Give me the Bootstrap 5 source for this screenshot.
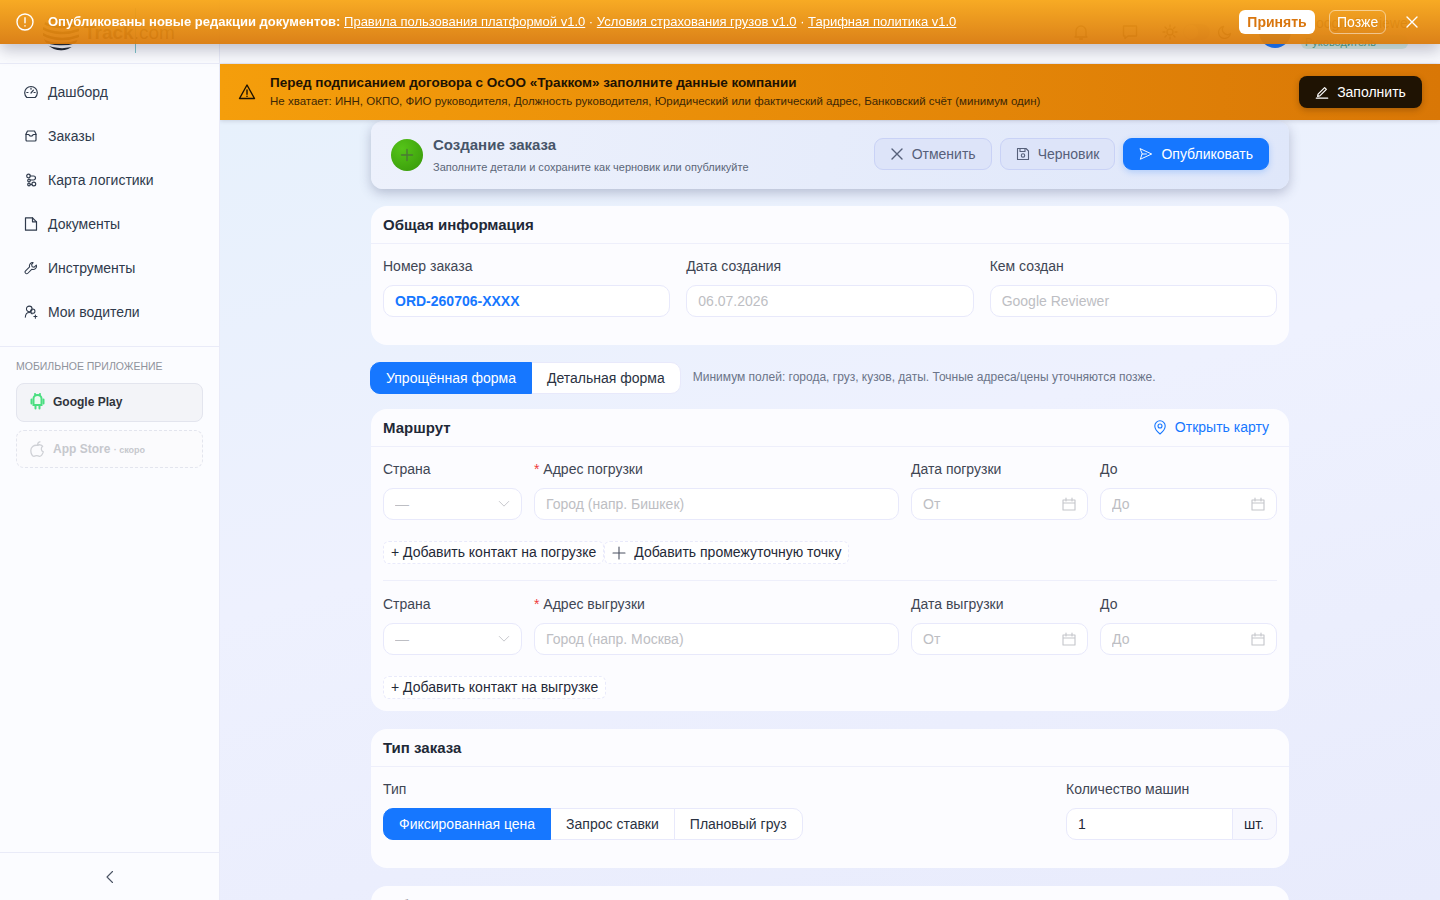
<!doctype html>
<html lang="ru">
<head>
  <meta charset="utf-8">
  <meta name="viewport" content="width=device-width, initial-scale=1">
  <title>Создание заказа</title>
  <link href="https://cdn.jsdelivr.net/npm/bootstrap@5.3.2/dist/css/bootstrap.min.css" rel="stylesheet">
  <style>
    body { font-family: "Liberation Sans", Arial, sans-serif; font-size: 14px; color: #1f2937; background: #eef1fe; }
    svg { display: block; flex: none; }
    .ico { fill: none; stroke: currentColor; stroke-width: 1.4; stroke-linecap: round; stroke-linejoin: round; }
    .ico-thin { stroke-width: 1.1; }

    /* sidebar */
    .side { width: 220px; flex: none; background: #fbfcff; border-right: 1px solid #e9ebf8; }
    .side-top { height: 64px; border-bottom: 1px solid #e9ebf8; flex: none; }
    .logo-word { left: 84px; top: 21px; font-size: 19px; font-weight: 700; color: #27323f; line-height: 24px; }
    .logo-word span { font-weight: 400; }
    .logo-line { left: 135px; top: 8px; width: 1px; height: 45px; background: #7cc4c8; }
    .logo-pic { left: 43px; top: 12px; }
    .side-nav { padding-top: 6px; padding-bottom: 12px; border-bottom: 1px solid #e9ebf8; }
    .side-link { height: 44px; padding-left: 24px; gap: 10px; color: #2f3a4c; text-decoration: none; }
    .side-link svg { color: #2f3a4c; stroke-width: 1.2; }
    .app-head { font-size: 10.5px; color: #8f939c; line-height: 14px; padding: 12px 16px 10px; }
    .app-btn { margin: 0 16px 8px; border-radius: 8px; font-size: 12px; font-weight: 700; gap: 8px; padding-left: 13px; }
    .app-on { height: 39px; padding-bottom: 2px; background: #f3f4f8; border: 1px solid #e3e5ee; color: #30343c; }
    .app-off { height: 38px; background: #fbfbfd; border: 1px dashed #e3e5ee; color: #c6c8cd; }
    .app-off small { font-size: 9px; font-weight: 700; color: #c6c8cd; }
    .side-foot { height: 48px; border-top: 1px solid #e9ebf8; color: #4a5363; flex: none; }

    /* header */
    .top-bar { height: 64px; flex: none; background: #f8f9fd; border-bottom: 1px solid #e9ebf8; padding-right: 32px; color: #555; }
    .bell-gap { margin-right: 31px; }
    .chat-gap { margin-right: 23px; }
    .theme-knob { width: 27px; height: 16px; margin: 0 8px 0 5px; background: #d8dbe4; border-radius: 8px; }
    .theme-knob span { display: block; width: 14px; height: 14px; margin: 1px; background: #fff; border-radius: 50%; }
    .avatar { width: 32px; height: 32px; margin: 0 10px 0 27px; background: #1677ff; }
    .who-box { width: 107px; white-space: nowrap; }
    .who { font-size: 14px; color: #333; line-height: 16px; padding-left: 4px; }
    .role { font-size: 11px; color: #4fa888; background: #d9f0e8; border-radius: 6px; line-height: 14px; padding: 0 4px; margin-top: 4px; }

    /* banners */
    .notice { height: 44px; z-index: 1050; color: #fff; padding: 0 20px 0 16px; font-size: 13px; background: linear-gradient(180deg, rgba(247,166,24,.95), rgba(217,122,12,.95)); box-shadow: 0 6px 16px rgba(40,40,70,.28); }
    .notice a { color: #fff; }
    .notice-txt { margin-left: 14px; }
    .notice-ok { height: 24px; padding: 0 8px; font-size: 14px; font-weight: 700; color: #d9760e; background: #fff; border: 0; border-radius: 6px; width: 76px; margin-right: 14px; }
    .notice-ok:hover { color: #d9760e; background: #fff; }
    .notice-later { height: 24px; padding: 0 7px; font-size: 14px; color: #fff; background: transparent; border: 1px solid rgba(255,255,255,.5); border-radius: 6px; width: 57px; margin-right: 18px; }
    .warn-bar { height: 56px; flex: none; padding: 0 18px; color: #1d1203; background: linear-gradient(90deg, #f59e0b, #d97706); z-index: 5; box-shadow: 0 1px 4px rgba(60,60,90,.18); }
    .warn-txt { margin-left: 14px; }
    .warn-title { font-size: 13.5px; font-weight: 700; line-height: 18px; margin-top: -1px; margin-bottom: 1px; }
    .warn-sub { font-size: 11.5px; line-height: 16px; color: #3c2706; }
    .warn-btn { height: 32px; width: 123px; font-size: 14px; color: #fff; background: #1f1303; border: 0; border-radius: 8px; gap: 8px; box-shadow: 0 2px 6px rgba(60,30,0,.3); }
    .warn-btn:hover { color: #fff; background: #1f1303; }

    /* content */
    .scroll-area { background: linear-gradient(165deg, #e7f1fc, #eef1fe 45%, #e8ebfc); padding-top: 1px; }
    .page-col { width: 918px; margin: 0 auto; }
    .order-head { height: 68px; padding: 0 20px; border-radius: 12px; background: linear-gradient(100deg, #edf1fc, #dfe7fa); box-shadow: 0 4px 12px rgba(70,80,120,.32); margin-bottom: 17px; }
    .plus-dot { width: 32px; height: 32px; margin-right: 10px; flex: none; background: radial-gradient(circle at 35% 30%, #55c418, #369609); color: #4b7a35; }
    .order-title { font-size: 15px; font-weight: 700; color: #475569; line-height: 18px; }
    .order-sub { font-size: 11px; color: #5b6678; line-height: 14px; margin-top: 6px; }
    .head-actions { margin-top: -2px; }
    .head-btn { height: 32px; font-size: 14px; border-radius: 9px; gap: 8px; padding: 0 15px; color: #56607a; background: #dde4f9; border: 1px solid #c9d2f6; }
    .head-btn:hover { color: #56607a; background: #dde4f9; border-color: #c9d2f6; }
    .head-main { color: #fff; background: #1677ff; border-color: #1677ff; box-shadow: 0 2px 6px rgba(22,119,255,.25); }
    .head-main:hover { color: #fff; background: #1677ff; border-color: #1677ff; }

    .form-box { background: #fcfcff; border: 0; border-radius: 16px; margin-bottom: 18px; }
    .form-box .card-header { height: 38px; padding: 1px 12px 0; font-size: 15px; font-weight: 700; color: #1f2937; background: transparent; border-bottom: 1px solid #eeeffb; }
    .form-box .card-body { padding: 12px; }
    .fld-label { font-size: 14px; line-height: 22px; margin: -1px 0 8px; color: #3f4654; }
    .req { color: #ef3b3b; }
    .fld { height: 32px; font-size: 14px; padding: 0 11px; border: 1px solid #e8e9fb; border-radius: 10px; background: #fff; color: #1f2937; }
    .fld:disabled { background: #fff; color: #bdbec3; }
    .fld::placeholder { color: #bdbec3; }
    .order-no { color: #1677ff; font-weight: 700; }
    .fld-icon { right: 12px; top: 9px; color: #c4c5ca; pointer-events: none; }
    .chev-icon { right: 12px; top: 10px; color: #c4c5ca; pointer-events: none; }
    .three-cols { display: grid; grid-template-columns: repeat(3, 1fr); gap: 16px; padding-bottom: 16px; }
    .route-cols { display: grid; grid-template-columns: 139px 1fr 177px 177px; gap: 12px; }
    .route-add { margin-top: 21px; }
    .dash-btn { height: 23px; padding: 0 7px; font-size: 14px; line-height: 21px; color: #1f2937; background: #fff; border: 1px dashed #e9eafb; border-radius: 6px; gap: 8px; }
    .dash-btn:hover { color: #1f2937; background: #fff; border-color: #e9eafb; }
    .dash-btn svg { color: #4a5160; }
    .route-line { border-top: 1px solid #eeeffb; margin: 16px 0 13px; }
    .map-link { color: #1677ff; text-decoration: none; gap: 8px; margin: -1px 8px 0 0; font-weight: 400; font-size: 14px; }

    .mode-row { height: 32px; margin: -1px 0 15px -1px; }
    .seg-btn { height: 32px; font-size: 14px; padding: 0 15px; color: #2a3242; background: #fff; border: 1px solid #e8e9fb; border-radius: 10px; }
    .seg-btn:hover { color: #2a3242; background: #fff; border-color: #e8e9fb; }
    .seg-on, .seg-on:hover { color: #fff; background: #1677ff; border-color: #1677ff; z-index: 2; }
    .mode-hint { font-size: 12px; color: #6b7488; margin-left: 12px; position: relative; top: -1px; }
    .unit { font-size: 14px; width: 45px; padding: 0 11px; background: #f8f8fe; border: 1px solid #e8e9fb; border-radius: 0 10px 10px 0; color: #1f2937; }
    .qty-box { width: 211px; }
    .qty-box .fld { border-radius: 10px 0 0 10px; }
    .type-body { padding-bottom: 28px !important; }
  </style>
</head>
<body>
  <div class="d-flex vh-100 overflow-hidden">

    <!-- Sidebar -->
    <aside class="side d-flex flex-column">
      <div class="side-top position-relative">
        <svg class="logo-pic position-absolute" width="36" height="40" viewBox="0 0 36 40" fill="none" stroke="#1d2530" stroke-width="2.600">
          <clipPath id="logoClip"><circle cx="18" cy="20" r="18.500"/></clipPath>
          <g clip-path="url(#logoClip)">
            <path d="M-2 3C8 10 24 11 38 5M-2 9c10 7 26 8 40 2M-2 15c10 7 26 8 40 2M-2 21c10 7 26 8 40 2M-2 27c10 6 26 7 40 1M0 33c10 5 24 6 38 1M4 38c8 3 20 4 30 1"/>
          </g>
        </svg>
        <div class="logo-word position-absolute">Track<span>.com</span></div>
        <div class="logo-line position-absolute"></div>
      </div>

      <nav class="side-nav">
        <a class="side-link d-flex align-items-center" href="#">
          <svg class="ico" width="14" height="14" viewBox="0 0 14 14"><path d="M2.800 12.500A6.300 6.300 0 1 1 11.200 12.500Z"/><path d="M7 8l2.400-2.800M2.800 7.500H4M7 3v1.200M10 7.500h1.200"/></svg>
          Дашборд
        </a>
        <a class="side-link d-flex align-items-center" href="#">
          <svg class="ico" width="14" height="14" viewBox="0 0 14 14"><path d="M3.500 2h7l1.500 3v6a1 1 0 0 1-1 1H3a1 1 0 0 1-1-1V5Z"/><path d="M2 5.500h2.800a2.300 2.300 0 0 0 4.400 0H12"/></svg>
          Заказы
        </a>
        <a class="side-link d-flex align-items-center" href="#">
          <svg class="ico" width="14" height="14" viewBox="0 0 14 14"><circle cx="4.500" cy="3" r="1.800"/><circle cx="5" cy="7.500" r="1.300"/><circle cx="9.800" cy="11" r="1.900"/><circle cx="5" cy="11.500" r="1.300"/><path d="M6 3h3.500a2 2 0 0 1 0 4H6.500M6.300 11.500h1.600"/></svg>
          Карта логистики
        </a>
        <a class="side-link d-flex align-items-center" href="#">
          <svg class="ico" width="14" height="14" viewBox="0 0 14 14"><path d="M8.500.8H1.500v12.400h11V4.800Z"/><path d="M8.500.8v4h4"/></svg>
          Документы
        </a>
        <a class="side-link d-flex align-items-center" href="#">
          <svg class="ico" width="14" height="14" viewBox="0 0 16 16"><path d="M10.400 1.800a3.800 3.800 0 0 0-4 5L1.800 11.400a1.800 1.800 0 0 0 2.600 2.600l4.700-4.600a3.800 3.800 0 0 0 5-4.700l-2.500 2.400-2.300-.6-.6-2.300Z"/></svg>
          Инструменты
        </a>
        <a class="side-link d-flex align-items-center" href="#">
          <svg class="ico" width="14" height="14" viewBox="0 0 16 16"><circle cx="6" cy="4.500" r="3.200"/><path d="M1.500 14c.2-3.300 2-5.500 4.500-5.500 1.400 0 2.600.6 3.300 1.700"/><circle cx="10" cy="7" r="2.500"/><path d="M13 11.500v3.500M11.300 13.200h3.500"/></svg>
          Мои водители
        </a>
      </nav>

      <div class="app-head">МОБИЛЬНОЕ ПРИЛОЖЕНИЕ</div>
      <div class="app-btn app-on d-flex align-items-center">
        <svg width="15" height="17" viewBox="0 0 15 17" fill="none" stroke="#4ade80" stroke-width="2" stroke-linecap="round">
          <path d="M3.500 5.500a4 3.500 0 0 1 8 0v6.500h-8Z" fill="#eafbf1"/><path d="M1.500 6.500v4M13.500 6.500v4M5.500 12.500v3M9.500 12.500v3M5 1l.6 1M10 1l-.6 1"/>
        </svg>
        Google Play
      </div>
      <div class="app-btn app-off d-flex align-items-center">
        <svg width="15" height="17" viewBox="0 0 15 17" fill="none" stroke="#cfd1d6" stroke-width="1.300" stroke-linejoin="round">
          <path d="M7.700 4.400c1.200-.9 3.600-1 5 .9-2.100 1.400-1.800 4.500.6 5.600-.7 2-2.200 4.600-3.900 4.400-1.200-.1-1.500-.7-2.700-.7s-1.600.6-2.700.7C2.300 15.500.8 12.500.8 9.600c0-3.400 2.800-6 6.900-5.200ZM7.600 4c0-1.700 1.100-3 2.800-3.300"/>
        </svg>
        <span>App Store <small>· скоро</small></span>
      </div>

      <div class="side-foot d-flex align-items-center justify-content-center mt-auto">
        <svg class="ico ico-thin" width="14" height="14" viewBox="0 0 14 14"><path d="M9.500 1.500 4 7l5.500 5.500"/></svg>
      </div>
    </aside>

    <!-- Main -->
    <main class="flex-grow-1 d-flex flex-column overflow-hidden">
      <header class="top-bar d-flex align-items-center justify-content-end">
        <svg class="ico bell-gap" width="18" height="18" viewBox="0 0 18 18"><path d="M4 13V8a5 5 0 0 1 10 0v5l1 1H3ZM7.500 16h3"/></svg>
        <svg class="ico chat-gap" width="18" height="18" viewBox="0 0 18 18"><path d="M2.500 3h13v10H7l-3 2.500V13H2.500Z"/></svg>
        <svg class="ico" width="16" height="16" viewBox="0 0 16 16"><circle cx="8" cy="8" r="3"/><path d="M8 1v2M8 13v2M1 8h2M13 8h2M3 3l1.400 1.400M11.600 11.600 13 13M3 13l1.400-1.400M11.600 4.400 13 3"/></svg>
        <div class="theme-knob"><span></span></div>
        <svg class="ico" width="14" height="14" viewBox="0 0 14 14"><path d="M12.500 8.500A6 6 0 1 1 5.500 1.500a5 5 0 0 0 7 7Z"/></svg>
        <div class="rounded-circle avatar"></div>
        <div class="who-box">
          <div class="who">Google Reviewer</div>
          <div class="role">Руководитель</div>
        </div>
      </header>

      <div class="warn-bar d-flex align-items-center">
        <svg class="ico" width="18" height="18" viewBox="0 0 18 18"><path d="M9 2 1.500 15.500h15Z"/><path d="M9 7v4.200M9 13.300v.1"/></svg>
        <div class="warn-txt flex-grow-1">
          <div class="warn-title">Перед подписанием договора с ОсОО «Тракком» заполните данные компании</div>
          <div class="warn-sub">Не хватает: ИНН, ОКПО, ФИО руководителя, Должность руководителя, Юридический или фактический адрес, Банковский счёт (минимум один)</div>
        </div>
        <button type="button" class="btn warn-btn d-flex align-items-center justify-content-center">
          <svg class="ico" width="14" height="14" viewBox="0 0 16 16"><path d="M3.500 10.500 11 3l2 2-7.500 7.500-2.500.5ZM1.500 15h13"/></svg>
          Заполнить
        </button>
      </div>

      <div class="scroll-area flex-grow-1 overflow-hidden">
        <div class="page-col">

          <div class="order-head d-flex align-items-center">
            <div class="plus-dot rounded-circle d-flex align-items-center justify-content-center">
              <svg class="ico" width="14" height="14" viewBox="0 0 14 14"><path d="M7 1.500v11M1.500 7h11"/></svg>
            </div>
            <div class="flex-grow-1">
              <div class="order-title">Создание заказа</div>
              <div class="order-sub">Заполните детали и сохраните как черновик или опубликуйте</div>
            </div>
            <div class="head-actions d-flex gap-2">
              <button type="button" class="btn head-btn d-flex align-items-center">
                <svg class="ico" width="14" height="14" viewBox="0 0 14 14"><path d="M2 2l10 10M12 2 2 12"/></svg>
                Отменить
              </button>
              <button type="button" class="btn head-btn d-flex align-items-center">
                <svg class="ico ico-thin" width="14" height="14" viewBox="0 0 14 14"><path d="M1.500 1.500h8.500l2.500 2.500v8.500h-11Z"/><path d="M4 1.500v3h5v-3"/><circle cx="7" cy="8.500" r="1.700"/></svg>
                Черновик
              </button>
              <button type="button" class="btn head-btn head-main d-flex align-items-center">
                <svg class="ico ico-thin" width="14" height="14" viewBox="0 0 16 14"><path d="M1.500 1 14.500 7 1.500 13 3.500 7ZM3.500 7h5"/></svg>
                Опубликовать
              </button>
            </div>
          </div>

          <div class="card form-box">
            <div class="card-header d-flex align-items-center">Общая информация</div>
            <div class="card-body">
              <div class="three-cols">
                <div>
                  <div class="fld-label">Номер заказа</div>
                  <input class="form-control fld order-no" value="ORD-260706-XXXX">
                </div>
                <div>
                  <div class="fld-label">Дата создания</div>
                  <input class="form-control fld" value="06.07.2026" disabled>
                </div>
                <div>
                  <div class="fld-label">Кем создан</div>
                  <input class="form-control fld" value="Google Reviewer" disabled>
                </div>
              </div>
            </div>
          </div>

          <div class="mode-row d-flex align-items-center">
            <div class="btn-group">
              <button type="button" class="btn seg-btn seg-on">Упрощённая форма</button>
              <button type="button" class="btn seg-btn">Детальная форма</button>
            </div>
            <div class="mode-hint">Минимум полей: города, груз, кузов, даты. Точные адреса/цены уточняются позже.</div>
          </div>

          <div class="card form-box">
            <div class="card-header d-flex align-items-center justify-content-between">
              Маршрут
              <a class="map-link d-flex align-items-center" href="#">
                <svg class="ico ico-thin" width="14" height="15" viewBox="0 0 14 15"><path d="M7 14S1.800 9.800 1.800 6a5.200 5.200 0 0 1 10.400 0C12.200 9.800 7 14 7 14Z"/><circle cx="7" cy="6" r="2"/></svg>
                Открыть карту
              </a>
            </div>
            <div class="card-body">
              <div class="route-cols">
                <div>
                  <div class="fld-label">Страна</div>
                  <div class="position-relative">
                    <input class="form-control fld" placeholder="—">
                    <svg class="ico ico-thin chev-icon position-absolute" width="12" height="12" viewBox="0 0 14 14"><path d="M1.500 4 7 9.500 12.500 4"/></svg>
                  </div>
                </div>
                <div>
                  <div class="fld-label"><span class="req">*</span> Адрес погрузки</div>
                  <input class="form-control fld" placeholder="Город (напр. Бишкек)">
                </div>
                <div>
                  <div class="fld-label">Дата погрузки</div>
                  <div class="position-relative">
                    <input class="form-control fld" placeholder="От">
                    <svg class="ico ico-thin fld-icon position-absolute" width="14" height="14" viewBox="0 0 14 14"><path d="M1 3h12v10H1ZM1 6h12M4 1v3M10 1v3"/></svg>
                  </div>
                </div>
                <div>
                  <div class="fld-label">До</div>
                  <div class="position-relative">
                    <input class="form-control fld" placeholder="До">
                    <svg class="ico ico-thin fld-icon position-absolute" width="14" height="14" viewBox="0 0 14 14"><path d="M1 3h12v10H1ZM1 6h12M4 1v3M10 1v3"/></svg>
                  </div>
                </div>
              </div>
              <div class="route-add d-flex">
                <button type="button" class="btn dash-btn">+ Добавить контакт на погрузке</button>
                <button type="button" class="btn dash-btn d-flex align-items-center">
                  <svg class="ico ico-thin" width="14" height="14" viewBox="0 0 14 14"><path d="M7 1v12M1 7h12"/></svg>
                  Добавить промежуточную точку
                </button>
              </div>
              <div class="route-line"></div>
              <div class="route-cols">
                <div>
                  <div class="fld-label">Страна</div>
                  <div class="position-relative">
                    <input class="form-control fld" placeholder="—">
                    <svg class="ico ico-thin chev-icon position-absolute" width="12" height="12" viewBox="0 0 14 14"><path d="M1.500 4 7 9.500 12.500 4"/></svg>
                  </div>
                </div>
                <div>
                  <div class="fld-label"><span class="req">*</span> Адрес выгрузки</div>
                  <input class="form-control fld" placeholder="Город (напр. Москва)">
                </div>
                <div>
                  <div class="fld-label">Дата выгрузки</div>
                  <div class="position-relative">
                    <input class="form-control fld" placeholder="От">
                    <svg class="ico ico-thin fld-icon position-absolute" width="14" height="14" viewBox="0 0 14 14"><path d="M1 3h12v10H1ZM1 6h12M4 1v3M10 1v3"/></svg>
                  </div>
                </div>
                <div>
                  <div class="fld-label">До</div>
                  <div class="position-relative">
                    <input class="form-control fld" placeholder="До">
                    <svg class="ico ico-thin fld-icon position-absolute" width="14" height="14" viewBox="0 0 14 14"><path d="M1 3h12v10H1ZM1 6h12M4 1v3M10 1v3"/></svg>
                  </div>
                </div>
              </div>
              <div class="route-add d-flex">
                <button type="button" class="btn dash-btn">+ Добавить контакт на выгрузке</button>
              </div>
            </div>
          </div>

          <div class="card form-box">
            <div class="card-header d-flex align-items-center">Тип заказа</div>
            <div class="card-body type-body d-flex justify-content-between">
              <div>
                <div class="fld-label">Тип</div>
                <div class="btn-group">
                  <button type="button" class="btn seg-btn seg-on">Фиксированная цена</button>
                  <button type="button" class="btn seg-btn">Запрос ставки</button>
                  <button type="button" class="btn seg-btn">Плановый груз</button>
                </div>
              </div>
              <div class="qty-box">
                <div class="fld-label">Количество машин</div>
                <div class="input-group">
                  <input class="form-control fld" value="1">
                  <span class="input-group-text unit">шт.</span>
                </div>
              </div>
            </div>
          </div>

          <div class="card form-box">
            <div class="card-header d-flex align-items-center">Габариты и груз</div>
          </div>

        </div>
      </div>
    </main>
  </div>

  <!-- Top notice lies over the whole page -->
  <div class="notice position-fixed top-0 start-0 w-100 d-flex align-items-center">
    <svg class="ico" width="18" height="18" viewBox="0 0 18 18"><circle cx="9" cy="9" r="8"/><path d="M9 4.800v5M9 12.800v.2"/></svg>
    <div class="notice-txt flex-grow-1">
      <b>Опубликованы новые редакции документов:</b>
      <a href="#">Правила пользования платформой v1.0</a> ·
      <a href="#">Условия страхования грузов v1.0</a> ·
      <a href="#">Тарифная политика v1.0</a>
    </div>
    <button type="button" class="btn notice-ok">Принять</button>
    <button type="button" class="btn notice-later">Позже</button>
    <svg class="ico" width="16" height="16" viewBox="0 0 16 16"><path d="M3 3l10 10M13 3 3 13"/></svg>
  </div>

  <script src="https://cdn.jsdelivr.net/npm/bootstrap@5.3.2/dist/js/bootstrap.bundle.min.js"></script>
</body>
</html>
